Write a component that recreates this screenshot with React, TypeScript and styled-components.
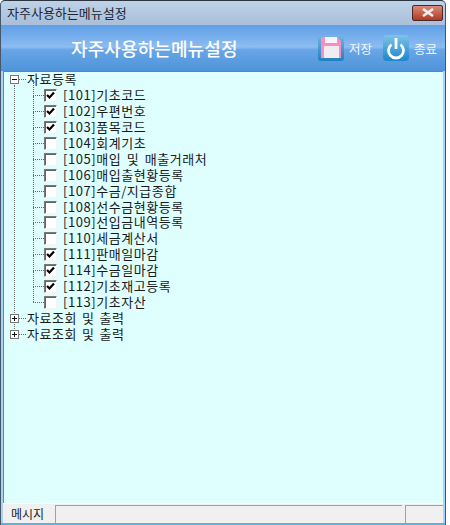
import React from "react";
import styled, { createGlobalStyle } from "styled-components";

const Global = createGlobalStyle`
  html, body { margin: 0; padding: 0; background: #fff; }
  body { font-family: "Noto Sans CJK KR", "Liberation Sans", sans-serif; font-size: 13px; }
`;

const Win = styled.div`
  width: 446px; height: 525px; box-sizing: border-box; display: flex; flex-direction: column;
  background: linear-gradient(#bed2e8, #a8bed9 25px);
  border-top: 1px solid #2c3440; border-left: 1px solid #45566b; border-right: 1px solid #45566b;
  border-radius: 5px 5px 0 0; overflow: hidden;
`;
const TitleBar = styled.div`
  height: 24px; display: flex; align-items: center; justify-content: space-between;
  padding: 0 2px 0 6px; flex: none;
`;
const Title = styled.span`color: #1c2430; font-size: 13px; line-height: 14px;`;
const CloseBtn = styled.div`
  width: 31px; height: 16px; box-sizing: border-box; margin-top: -1px; border: 1px solid #4f2626; border-radius: 2px;
  background: linear-gradient(#d98c7c, #c9604c 50%, #a93c2a); display: flex; align-items: center; justify-content: center;
`;
const Inner = styled.div`
  flex: 1; display: flex; flex-direction: column; padding: 0 2px; min-height: 0;
  background: #a9d4f5;
`;
const Header = styled.div`
  height: 46px; flex: none; margin: 0 -2px; display: flex; align-items: center; padding: 0 8px 0 70px;
  background: linear-gradient(#5f9fe6, #8cbcf2 48%, #67a5e6 54%, #4f94da);
`;
const Heading = styled.div`flex: 1; color: #fff; font-size: 18px; font-weight: 500; letter-spacing: 0.1px;`;
const Action = styled.div`display: flex; align-items: center; gap: 5px; margin-left: 11px; color: #f2f8ff; font-size: 12.5px; &:first-of-type { margin-left: 0; }`;
const Tree = styled.div`
  flex: 1; min-height: 0; background: #dfffff; border-top: 1px solid #7d7f80; border-left: 1px solid #7d7f80;
  padding: 0 0 0 6px; color: #1a1a1a; position: relative; font-size: 13px;
  &::before { content: ""; position: absolute; left: 10px; top: 13px; height: 248px; border-left: 1px dotted #666; }
`;
const Row = styled.div`
  height: 15.9px; display: flex; align-items: center; white-space: nowrap; position: relative;
`;
const Expander = styled.div`
  width: 9px; height: 9px; box-sizing: border-box; border: 1px solid #777; background: #fff; position: relative; flex: none; z-index: 1;
  &::before { content: ""; position: absolute; left: 1px; right: 1px; top: 3px; height: 1px; background: #111; }
`;
const Plus = styled(Expander)`
  &::after { content: ""; position: absolute; top: 1px; bottom: 1px; left: 3px; width: 1px; background: #111; }
`;
const Dash = styled.div<{ $w: number }>`
  width: ${p => p.$w}px; height: 0; border-top: 1px dotted #666; flex: none;
`;
const GroupLabel = styled.span`letter-spacing: 0.55px; word-spacing: 1.5px; margin-left: 1px; line-height: 13px; padding-bottom: 2px;`;
const Child = styled(Row)`
  padding-left: 23px;
  &::before { content: ""; position: absolute; left: 23px; top: -8px; height: 16px; border-left: 1px dotted #666; }
`;
const Check = styled.div`
  width: 13px; height: 13px; box-sizing: border-box; flex: none; background: #fff;
  border: 1px solid; border-color: #777 #f4f4f4 #f4f4f4 #777; box-shadow: inset 1px 1px 0 #666;
  display: flex; align-items: center; justify-content: center;
`;
const Label = styled.span`margin-left: 6px; letter-spacing: 0.55px; word-spacing: 2px; line-height: 13px; padding-bottom: 2px;`;
const Status = styled.div`
  height: 20px; flex: none; display: flex; background: #f0f0f0; padding: 1px 0 0 1px; gap: 3px; box-sizing: border-box; border-top: 1px solid #fff;
`;
const MessagePane = styled.div`
  width: 48px; flex: none; font-size: 12px; line-height: 17px; padding-left: 7px; box-sizing: border-box; color: #222;
`;
const Pane = styled.div<{ $w?: number }>`
  ${p => (p.$w ? `width:${p.$w}px;flex:none;` : "flex:1;")}
  border-top: 1px solid #a0a0a0; border-left: 1px solid #a0a0a0; box-sizing: border-box;
`;
const BottomLine = styled.div`height: 2px; flex: none; background: #56b4de; margin: 0 -2px;`;

const items: [string, boolean][] = [
  ["[101]기초코드", true], ["[102]우편번호", true], ["[103]품목코드", true], ["[104]회계기초", false],
  ["[105]매입 및 매출거래처", false], ["[106]매입출현황등록", false], ["[107]수금/지급종합", false],
  ["[108]선수금현황등록", false], ["[109]선입금내역등록", false], ["[110]세금계산서", false],
  ["[111]판매일마감", true], ["[114]수금일마감", true], ["[112]기초재고등록", true], ["[113]기초자산", false],
];

const SaveIcon = () => (
  <svg width="26" height="26" viewBox="0 0 26 26">
    <defs><linearGradient id="s" x1="0" y1="0" x2="0" y2="1"><stop offset="0" stopColor="#72b8de"/><stop offset="1" stopColor="#1f7fc0"/></linearGradient></defs>
    <rect width="26" height="26" rx="3" fill="url(#s)"/>
    <path d="M3 2H19L23 6V23H3Z" fill="#f98cc2"/>
    <rect x="7" y="2" width="12" height="6" fill="#f8f6fa"/>
    <rect x="6" y="11" width="15" height="12" fill="#eeeef2"/>
  </svg>
);
const PowerIcon = () => (
  <svg width="26" height="26" viewBox="0 0 26 26">
    <defs><linearGradient id="p" x1="0" y1="0" x2="0" y2="1"><stop offset="0" stopColor="#7fc2e8"/><stop offset="1" stopColor="#1a86cc"/></linearGradient></defs>
    <rect width="26" height="26" rx="4" fill="url(#p)"/>
    <path d="M8.5 9.5A7.5 7.5 0 1 0 17.5 9.5" fill="none" stroke="#fff" strokeWidth="2.8"/>
    <rect x="11.6" y="3" width="2.8" height="11" fill="#fff"/>
  </svg>
);
const Tick = () => (
  <svg width="9" height="9" viewBox="0 0 9 9"><path d="M1 4L3.5 6.5L8 1.5" fill="none" stroke="#000" strokeWidth="2.2"/></svg>
);

export default function App() {
  return (
    <Win>
      <Global />
      <TitleBar>
        <Title>자주사용하는메뉴설정</Title>
        <CloseBtn>
          <svg width="14" height="9" viewBox="0 0 14 9"><path d="M2 1L12 8M12 1L2 8" stroke="#eeeeee" strokeWidth="2.6"/></svg>
        </CloseBtn>
      </TitleBar>
      <Inner>
        <Header>
          <Heading>자주사용하는메뉴설정</Heading>
          <Action><SaveIcon />저장</Action>
          <Action><PowerIcon />종료</Action>
        </Header>
        <Tree>
          <Row><Expander /><Dash $w={7} /><GroupLabel>자료등록</GroupLabel></Row>
          {items.map(([t, c]) => (
            <Child key={t}>
              <Dash $w={11} />
              <Check>{c && <Tick />}</Check>
              <Label>{t}</Label>
            </Child>
          ))}
          <Row><Plus /><Dash $w={7} /><GroupLabel>자료조회 및 출력</GroupLabel></Row>
          <Row><Plus /><Dash $w={7} /><GroupLabel>자료조회 및 출력</GroupLabel></Row>
        </Tree>
        <Status>
          <MessagePane>메시지</MessagePane>
          <Pane />
          <Pane $w={38} />
        </Status>
        <BottomLine />
      </Inner>
    </Win>
  );
}
